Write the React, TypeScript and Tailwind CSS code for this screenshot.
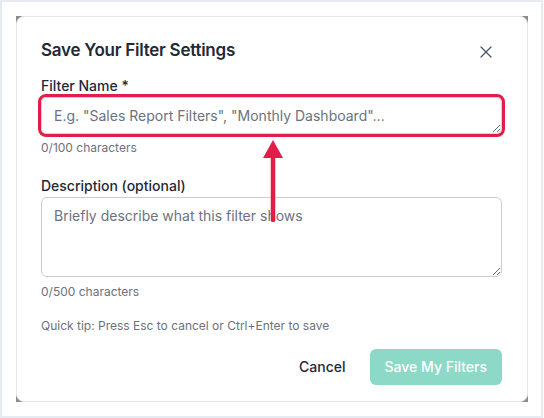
import { X } from "lucide-react"

const font = { fontFamily: "Inter, 'Noto Sans', sans-serif" }

export default function App() {
    return (
        <div className="w-[544px] h-[418px] bg-white" style={font}>
            <div className="w-[543px] h-[418px] border-2 border-[#e6ebf2] pl-[14px] pt-[14px]">
                <div className="w-[512px] h-[386px] bg-[#8c8c8c]">
                    <div className="relative h-full rounded-lg border border-[#e5e7eb] bg-white pl-6 pr-[25px] pt-[19px]">
                        <div className="flex items-start justify-between">
                            <h2 className="text-[17px] leading-7 font-semibold tracking-[-0.25px] text-[#1f2937]">Save Your Filter Settings</h2>
                            <button className="mt-[6px] mr-[6px] text-[#4b5563]">
                                <X size={20} strokeWidth={1.5} />
                            </button>
                        </div>

                        <div className="mt-3">
                            <label className="block text-sm font-medium text-[#1f2937]">Filter Name *</label>
                            <div className="relative mt-[1px]">
                                <textarea
                                    rows={1}
                                    placeholder={'E.g. "Sales Report Filters", "Monthly Dashboard"...'}
                                    className="block h-[37px] w-full resize-y rounded-md border border-[#d1d5db] px-3 py-2 text-sm leading-5 text-[#1f2937] placeholder:text-[#6b7280] outline-none"
                                />
                                <div className="pointer-events-none absolute -inset-[3px] rounded-lg border-[3px] border-[#e11d48]" />
                            </div>
                            <p className="mt-[6px] text-xs text-[#6b7280]">0/100 characters</p>
                        </div>

                        <div className="mt-5">
                            <label className="block text-sm font-medium text-[#1f2937]">Description (optional)</label>
                            <textarea
                                placeholder="Briefly describe what this filter shows"
                                className="mt-[1px] block h-[80px] w-full resize-y rounded-md border border-[#c9cdd3] px-3 py-2 text-sm leading-5 text-[#1f2937] placeholder:text-[#6b7280] outline-none"
                            />
                            <p className="mt-[7px] text-xs text-[#6b7280]">0/500 characters</p>
                        </div>

                        <p className="mt-[18px] text-xs text-[#6b7280]">Quick tip: Press Esc to cancel or Ctrl+Enter to save</p>

                        <div className="mt-[15px] flex items-center justify-end gap-6">
                            <button className="text-sm font-medium text-[#1f2937]">Cancel</button>
                            <button className="h-9 rounded-md bg-[#8dd9c8] px-[15px] text-sm font-medium text-white">Save My Filters</button>
                        </div>

                        {/* annotation arrow */}
                        <svg className="pointer-events-none absolute left-[245px] top-[123px]" width="22" height="82" viewBox="0 0 22 82">
                            <polygon points="11,0 21,18 1,18" fill="#e11d48" />
                            <line x1="11" y1="16" x2="11" y2="80" stroke="#e11d48" strokeWidth="4.5" strokeLinecap="round" />
                        </svg>
                    </div>
                </div>
            </div>
        </div>
    )
}
